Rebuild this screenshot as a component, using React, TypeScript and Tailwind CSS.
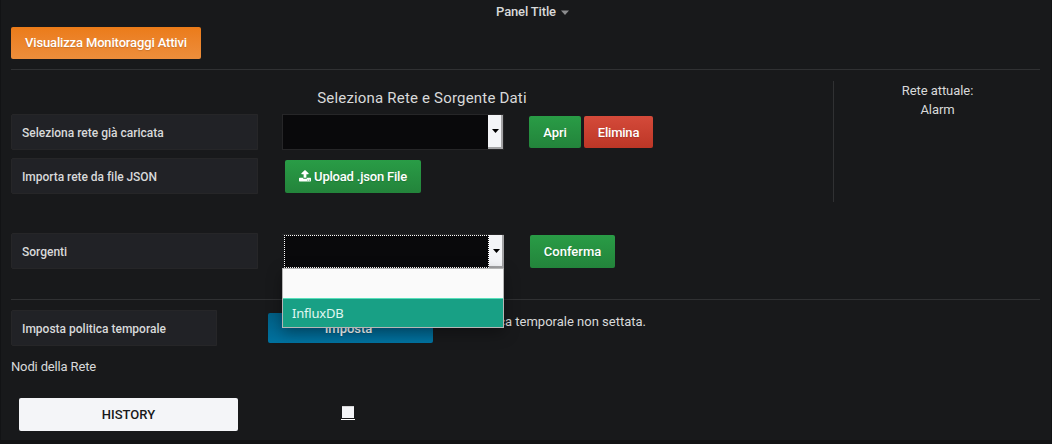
import type { ReactNode } from 'react';

function Label({ children, className }: { children: ReactNode; className: string }) {
  return (
    <div className={`flex h-9 shrink-0 items-center rounded-l-[2px] border border-[#262628] bg-[#212226] pl-2.5 pt-0.5 text-xs font-medium ${className}`}>
      {children}
    </div>
  );
}

const button = 'flex shrink-0 items-center justify-center rounded-[2px] text-[13px] font-medium text-white [text-shadow:0_1px_1px_rgba(0,0,0,0.15)]';
const green = 'bg-linear-to-b from-[#299c46] to-[#23843b]';

function SelectArrow() {
  return (
    <span className="flex h-full w-[15px] items-center justify-center border-r-2 border-b-2 border-[#a3a3a5] bg-[#f4f5f8]">
      <svg width="7" height="4" viewBox="0 0 7 4" className="translate-x-px">
        <path d="M0 0h7L3.500 4z" fill="#000" />
      </svg>
    </span>
  );
}

export default function App() {
  return (
    <div className="h-[444px] w-[1052px] overflow-hidden border-x border-b-4 border-[#121315] bg-[#18191b] pl-2.5 pr-[11px] font-['Roboto',sans-serif] text-[13px] leading-[19px] text-[#d8d9da]">
      <div className="flex h-[27px] items-start justify-center gap-[5px] pl-[14px] pt-0.5 font-medium tracking-[-0.15px]">
        <span>Panel Title</span>
        <svg width="8" height="5" viewBox="0 0 8 5" className="mt-[8px]">
          <path d="M0 0.500h8L4 5z" fill="#8b8c8e" />
        </svg>
      </div>
      <button className={`${button} h-8 w-[190px] bg-linear-to-b from-[#eb7b18] to-[#ed8e3b] pb-px tracking-[-0.15px]`}>Visualizza Monitoraggi Attivi</button>
      <div className="mt-2.5 h-px bg-[#303133]" />

      <div className="flex h-[229px] pt-[11px]">
        <div className="w-[822px]">
          <h2 className="h-[33px] pt-[7px] text-center text-[15px] font-normal leading-5 tracking-[0.19px]">Seleziona Rete e Sorgente Dati</h2>
          <div className="flex h-11 items-start">
            <Label className="w-[247px]">Seleziona rete già caricata</Label>
            <div className="ml-6 flex h-9 w-[222px] justify-end border border-[#262628] bg-[#09090b]">
              <SelectArrow />
            </div>
            <button className={`${button} ${green} ml-[25px] mt-0.5 h-8 w-[52px]`}>Apri</button>
            <button className={`${button} ml-[3px] mt-0.5 h-8 w-[69px] bg-linear-to-b from-[#d44a3a] to-[#bd3626] tracking-[-0.2px]`}>Elimina</button>
          </div>
          <div className="flex h-[75px] items-start">
            <Label className="w-[247px] tracking-[-0.04px]">Importa rete da file JSON</Label>
            <button className={`${button} ${green} ml-[27px] mt-0.5 h-[33px] w-[136px] gap-[3px] tracking-[-0.2px]`}>
              <svg width="12" height="12" viewBox="0 -64 1664 1664" fill="currentColor" className="-translate-y-px">
                <path fillRule="evenodd" d="M1280 1344q0-26-19-45t-45-19-45 19-19 45 19 45 45 19 45-19 19-45zm256 0q0-26-19-45t-45-19-45 19-19 45 19 45 45 19 45-19 19-45zm128-224v320q0 40-28 68t-68 28H96q-40 0-68-28t-28-68v-320q0-40 28-68t68-28h427q21 56 70.500 92t110.500 36h256q61 0 110.500-36t70.500-92h427q40 0 68 28t28 68zm-325-648q-17 40-59 40h-256v448q0 26-19 45t-45 19H704q-26 0-45-19t-19-45V512H384q-42 0-59-40-17-39 14-69L787-45q18-19 45-19t45 19l448 448q31 30 14 69z" />
              </svg>
              <span>Upload .json File</span>
            </button>
          </div>
          <div className="relative flex items-start">
            <Label className="w-[247px]">Sorgenti</Label>
            <div className="ml-6 mt-px flex h-[35px] w-[222px] border-y border-[#262628] bg-[#18191b] pl-0.5">
              <div className="h-[33px] w-[205px] border border-dotted border-white bg-[#09090b]" />
              <SelectArrow />
            </div>
            <button className={`${button} ${green} ml-[26px] mt-0.5 h-[33px] w-[85px]`}>Conferma</button>
            <div className="absolute left-[271px] top-[35px] z-10 h-[60px] w-[222px] border border-[#b6b6b6] bg-[#fafafa] pt-[29px] shadow-[0_5px_14px_rgba(0,0,0,0.35)]">
              <div className="h-[29px] border-t border-[#57e0ba] bg-[#18a085] pl-[9px] pt-[5px] font-['Noto_Sans',sans-serif] text-[13px] leading-[19px] tracking-[-0.2px] text-[#e0f7f1]">InfluxDB</div>
            </div>
          </div>
        </div>
        <div className="h-[121px] w-[207px] border-l border-[#303133] pl-px text-center tracking-[-0.06px]">
          <div>Rete attuale:</div>
          <div>Alarm</div>
        </div>
      </div>

      <div className="h-px bg-[#303133]" />
      <div className="flex h-[57px] items-start pt-2.5">
        <Label className="w-[206px]">Imposta politica temporale</Label>
        <button className={`${button} ml-[51px] mt-[3px] h-[30px] w-[165px] bg-linear-to-b from-[#005f85] to-[#0072a0] pr-1`}>Imposta</button>
        <div className="mt-0.5 w-[213px] text-right">Politica temporale non settata.</div>
      </div>
      <div className="h-[41px] tracking-[-0.15px]">Nodi della Rete</div>
      <div className="flex items-start pl-2">
        <button className="h-[33px] w-[219px] rounded-[2px] bg-[#f4f5f8] text-[13px] font-medium text-[#18191b]">HISTORY</button>
        <div className="ml-[103px] mt-2 h-[14px] w-[14px] border-b border-white px-px pb-px">
          <div className="h-3 w-3 border-t border-[#d4d4d6] bg-[#f4f5f8]" />
        </div>
      </div>
    </div>
  );
}
